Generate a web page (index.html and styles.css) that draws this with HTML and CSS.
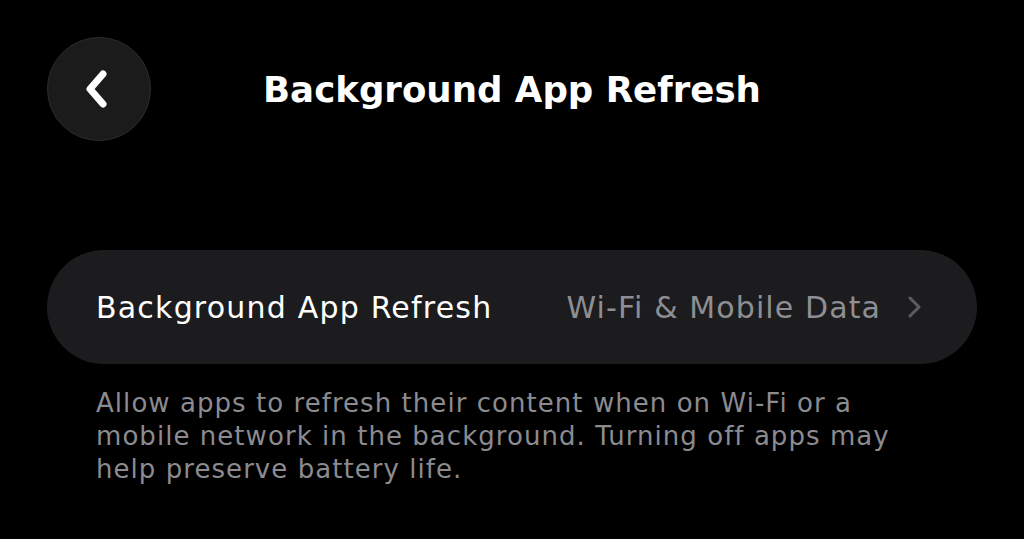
FILE: index.html
```html
<!DOCTYPE html>
<html lang="en">
<head>
    <meta charset="UTF-8">
    <meta name="viewport" content="width=device-width, initial-scale=1.0">
    <title>Background App Refresh</title>
    <link rel="stylesheet" href="styles.css">
</head>
<body>
    <div class="screen">
        <div class="nav-bar">
            <button type="button" class="back-btn" aria-label="Back">
                <svg width="30" height="44" viewBox="0 0 30 44">
                    <path d="M21 7 L8 22 L21 37" fill="none" stroke="#fff" stroke-width="7" stroke-linecap="round" stroke-linejoin="round"/>
                </svg>
            </button>
            <h1 class="title">Background App Refresh</h1>
        </div>

        <div class="group">
            <div class="row">
                <span class="row-label">Background App Refresh</span>
                <span class="row-value">Wi-Fi &amp; Mobile Data</span>
                <svg class="chevron" width="14" height="26" viewBox="0 0 14 26">
                    <path d="M2 4 L11 13 L2 22" fill="none" stroke="#5c5c61" stroke-width="3" stroke-linecap="round" stroke-linejoin="round"/>
                </svg>
            </div>
        </div>

        <p class="footnote">Allow apps to refresh their content when on Wi-Fi or a mobile network in the background. Turning off apps may help preserve battery life.</p>
    </div>
</body>
</html>
```

FILE: styles.css
```css
* {
    margin: 0;
    padding: 0;
    box-sizing: border-box;
    font-family: 'DejaVu Sans', sans-serif;
}

body {
    background: #000;
    color: #fff;
    width: 1024px;
    height: 539px;
    overflow: hidden;
}

.screen {
    padding: 37px 47px 0 47px;
}

.nav-bar {
    display: flex;
    align-items: center;
    height: 104px;
}

.back-btn {
    width: 104px;
    height: 104px;
    border-radius: 50%;
    background: #1b1b1b;
    border: 1px solid #2c2c2c;
    display: flex;
    align-items: center;
    justify-content: center;
    padding-right: 4px;
}

.title {
    margin-left: 112px;
    font-size: 35.6px;
    font-weight: 700;
}

.group {
    margin-top: 109px;
    background: #1c1c1e;
    border-radius: 57px;
    width: 930px;
    height: 114px;
}

.row {
    display: flex;
    align-items: center;
    height: 100%;
    padding: 0 55px 0 49px;
}

.row-label {
    font-size: 30px;
    letter-spacing: 1.2px;
    flex: 1;
}

.row-value {
    font-size: 30px;
    letter-spacing: 1.1px;
    color: #8e8e93;
    margin-right: 27px;
}

.chevron {
    display: block;
}

.footnote {
    margin-top: 23px;
    margin-left: 49px;
    width: 820px;
    font-size: 26px;
    line-height: 33px;
    letter-spacing: 1.05px;
    color: #8b8b90;
}
```
